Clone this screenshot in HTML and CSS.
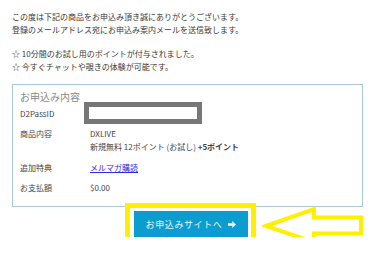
FILE: index.html
```html
<!DOCTYPE html>
<html lang="ja">
<head>
<meta charset="utf-8">
<link rel="stylesheet" href="styles.css">
</head>
<body>
<p class="intro">この度は下記の商品をお申込み頂き誠にありがとうございます。<br>登録のメールアドレス宛にお申込み案内メールを送信致します。</p>
<p class="intro notes">☆ 10分間のお試し用のポイントが付与されました。<br>☆ 今すぐチャットや覗きの体験が可能です。</p>
<section class="box">
  <h2 class="box-title">お申込み内容</h2>
  <div class="row row-id">
    <div class="label">D2PassID</div>
    <div class="value"><span class="masked"></span></div>
  </div>
  <div class="row row-product">
    <div class="label">商品内容</div>
    <div class="value">DXLIVE<br>新規無料 12ポイント (お試し) <b>+5ポイント</b></div>
  </div>
  <div class="row row-bonus">
    <div class="label">追加特典</div>
    <div class="value"><a class="link" href="#">メルマガ購読</a></div>
  </div>
  <div class="row row-pay">
    <div class="label">お支払額</div>
    <div class="value">$0.00</div>
  </div>
</section>
<div class="actions">
  <a class="cta" href="#">
    <span class="cta-text">お申込みサイトへ</span>
    <svg class="cta-icon" width="8" height="7" viewBox="0 0 8 7"><path d="M0 2.3h4.2V0L8 3.5 4.2 7V4.7H0z" fill="#eef8fc"/></svg>
    <span class="highlight"></span>
    <svg class="pointer" width="104" height="44" viewBox="0 0 104 44"><path d="M4 22 L52 5 L52 13.5 L99 13.5 L99 29.5 L52 29.5 L52 38 Z" fill="none" stroke="#fff000" stroke-width="4" stroke-linejoin="miter"/></svg>
  </a>
</div>
</body>
</html>
```
FILE: styles.css
```css
html, body {
  margin: 0;
  padding: 0;
  background: #ffffff;
}
body {
  padding: 10px 18px 0 12px;
  font-family: "Noto Sans CJK JP", "Noto Sans", sans-serif;
  color: #444;
}
.intro {
  margin: 0;
  font-size: 8px;
  line-height: 13px;
  color: #3a3a3a;
}
.notes {
  margin-top: 11px;
}
.box {
  margin-top: 11px;
  border: 1px solid #a9c7de;
  padding: 6px 7px 12px 7px;
}
.box-title {
  margin: 0;
  font-size: 10px;
  line-height: 11px;
  font-weight: normal;
  color: #8a8a8a;
}
.row {
  display: grid;
  grid-template-columns: 70px 1fr;
  font-size: 8px;
  line-height: 13px;
  color: #444;
}
.row-id {
  align-items: center;
  height: 22px;
}
.row-product { margin-top: 3px; }
.row-bonus { margin-top: 8px; }
.row-pay { margin-top: 7px; }
.value b {
  font-weight: bold;
}
.masked {
  display: block;
  box-sizing: border-box;
  width: 118px;
  height: 22px;
  margin-left: -6px;
  border: 5px solid #777;
  background: #fff;
}
.link {
  color: #2a2ae0;
  text-decoration: underline;
}
.actions {
  margin-top: 4px;
  padding-left: 7px;
  display: flex;
  justify-content: center;
}
.cta {
  position: relative;
  box-sizing: border-box;
  width: 114px;
  height: 26px;
  display: flex;
  align-items: center;
  justify-content: center;
  gap: 6px;
  background: #0b9cd0;
  box-shadow: 0 1px 0 #9fb4c0;
  text-decoration: none;
  color: #e6f4fb;
  font-size: 9px;
  letter-spacing: 0.6px;
}
.cta-icon {
  display: block;
}
.highlight {
  position: absolute;
  top: -8px;
  left: -9px;
  right: -8px;
  bottom: -7px;
  border: 5px solid #fff000;
  pointer-events: none;
}
.pointer {
  position: absolute;
  left: 128px;
  top: -7px;
}
```
